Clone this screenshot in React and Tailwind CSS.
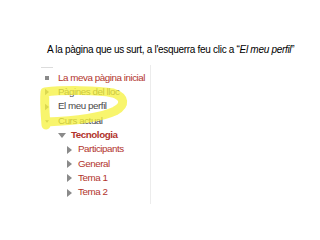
/* Moodle nav block screenshot with hand-drawn highlight */

const items = [
  { label: "La meva pàgina inicial", icon: "dot", level: 0, tone: "red" },
  { label: "Pàgines del lloc", icon: "right", level: 0, tone: "grey" },
  { label: "El meu perfil", icon: "right", level: 0, tone: "grey" },
  { label: "Curs actual", icon: "down", level: 0, tone: "grey" },
  { label: "Tecnologia", icon: "down", level: 1, tone: "red", bold: true },
  { label: "Participants", icon: "right", level: 2, tone: "red" },
  { label: "General", icon: "right", level: 2, tone: "red" },
  { label: "Tema 1", icon: "right", level: 2, tone: "red" },
  { label: "Tema 2", icon: "right", level: 2, tone: "red" },
];

function Icon({ type }) {
  if (type === "dot") return <span className="block w-[4px] h-[4px] bg-[#8a8a8a]" />;
  if (type === "down")
    return (
      <svg width="8" height="5" viewBox="0 0 8 5">
        <path d="M0 0 L8 0 L4 5 Z" fill="#8a8a8a" />
      </svg>
    );
  return (
    <svg width="5" height="8" viewBox="0 0 5 8">
      <path d="M0 0 L5 4 L0 8 Z" fill="#8a8a8a" />
    </svg>
  );
}

const indent = ["pl-[5px] gap-[9px]", "pl-[18px] gap-[5px]", "pl-[27px] gap-[6px]"];
const iconBox = ["w-[4px]", "w-[8px]", "w-[5px]"];

export default function App() {
  return (
    <div className="relative w-[320px] h-[240px] bg-white overflow-hidden font-['Liberation_Sans',Arial,sans-serif]">
      <p className="pt-[43px] pl-[47px] text-[10px] tracking-[-0.3px] leading-[13px] text-black whitespace-nowrap">
        A la pàgina que us surt, a l'esquerra feu clic a “<i>El meu perfil</i>”
      </p>

      {/* nav block */}
      <div className="ml-[40px] mt-[9px] w-[111px] border-r border-[#ececec] pt-[2px] pb-[4px]">
        <div className="h-[1px] w-[12px] ml-[1px] bg-[#dcdcdc]" />
        <ul className="mt-[3px]">
          {items.map(it => (
            <li
              key={it.label}
              className={`flex items-center h-[14.3px] ${indent[it.level]}`}
            >
              <span className={`flex justify-center ${iconBox[it.level]}`}>
                <Icon type={it.icon} />
              </span>
              <span
                className={`text-[9.8px] tracking-[-0.45px] whitespace-nowrap ${
                  it.tone === "red" ? "text-[#b2342c]" : "text-[#4a4a4a]"
                } ${it.bold ? "font-bold" : ""}`}
              >
                {it.label}
              </span>
            </li>
          ))}
        </ul>
      </div>

      {/* yellow marker loop */}
      <svg
        className="absolute left-0 top-0 pointer-events-none"
        width="320"
        height="240"
        viewBox="0 0 320 240"
      >
        <path
          d="M46 125 C45 112 44 102 45 92 C62 90 98 90 113 93 C125 97 126 105 115 111 C100 118 72 121 46 122"
          fill="none"
          stroke="#f6f23c"
          strokeWidth="9"
          strokeLinecap="round"
          strokeLinejoin="round"
          opacity="0.75"
        />
      </svg>
    </div>
  );
}
